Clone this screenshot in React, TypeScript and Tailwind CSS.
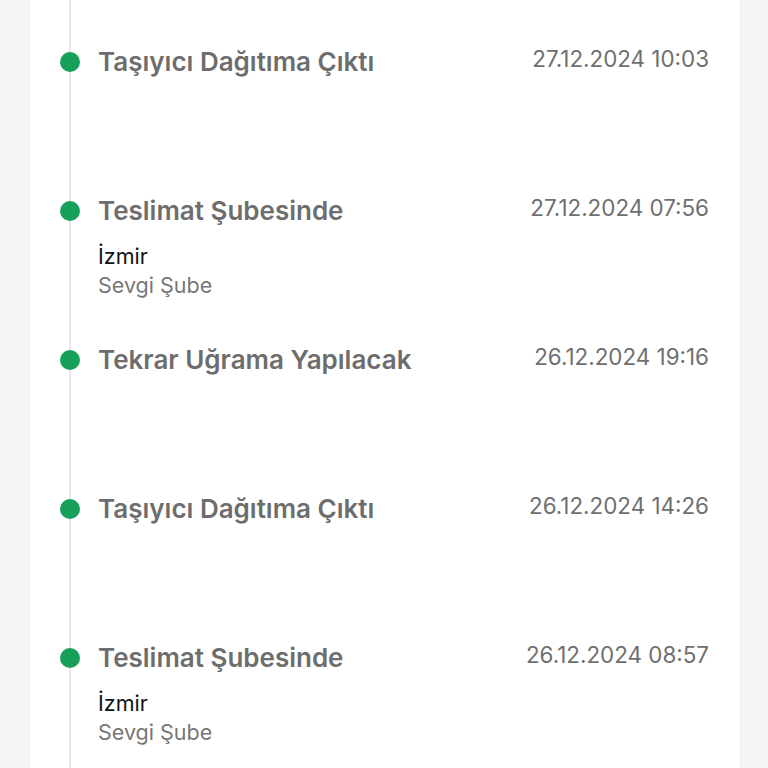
import React from 'react';

interface TrackingEvent {
  title: string;
  date: string;
  city?: string;
  branch?: string;
}

const events: TrackingEvent[] = [
  { title: 'Taşıyıcı Dağıtıma Çıktı', date: '27.12.2024 10:03' },
  { title: 'Teslimat Şubesinde', date: '27.12.2024 07:56', city: 'İzmir', branch: 'Sevgi Şube' },
  { title: 'Tekrar Uğrama Yapılacak', date: '26.12.2024 19:16' },
  { title: 'Taşıyıcı Dağıtıma Çıktı', date: '26.12.2024 14:26' },
  { title: 'Teslimat Şubesinde', date: '26.12.2024 08:57', city: 'İzmir', branch: 'Sevgi Şube' },
];

const App: React.FC = () => {
  return (
    <div
      className="h-[768px] overflow-hidden bg-[#f4f5f7] px-[30px] pr-[28px]"
      style={{ fontFamily: 'Inter, "Noto Sans", sans-serif' }}
    >
      <div className="relative h-full bg-white shadow-[0_0_2px_rgba(0,0,0,0.06)]">
        {/* Timeline line */}
        <div className="absolute left-[39px] top-0 bottom-0 w-[2px] bg-[#e6e7ea]" />

        <ul className="relative pt-[47px] pl-[30px] pr-[31px]">
          {events.map((ev, i) => (
            <li key={i} className="flex items-start h-[149px]">
              <span className="mt-[5px] w-[20px] h-[20px] rounded-full bg-[#16a05a] shrink-0" />
              <div className="ml-[18px] flex-1">
                <div className="text-[26px] leading-[30px] font-semibold text-[#6d6d6d]">{ev.title}</div>
                {ev.city && (
                  <div className="mt-[16px] text-[21.5px] leading-[29px]">
                    <div className="text-[#111111]">{ev.city}</div>
                    <div className="text-[#777777]">{ev.branch}</div>
                  </div>
                )}
              </div>
              <div className="mt-[-1px] text-[22.4px] leading-[26px] text-[#6f6f6f]">{ev.date}</div>
            </li>
          ))}
        </ul>
      </div>
    </div>
  );
};

export default App;
